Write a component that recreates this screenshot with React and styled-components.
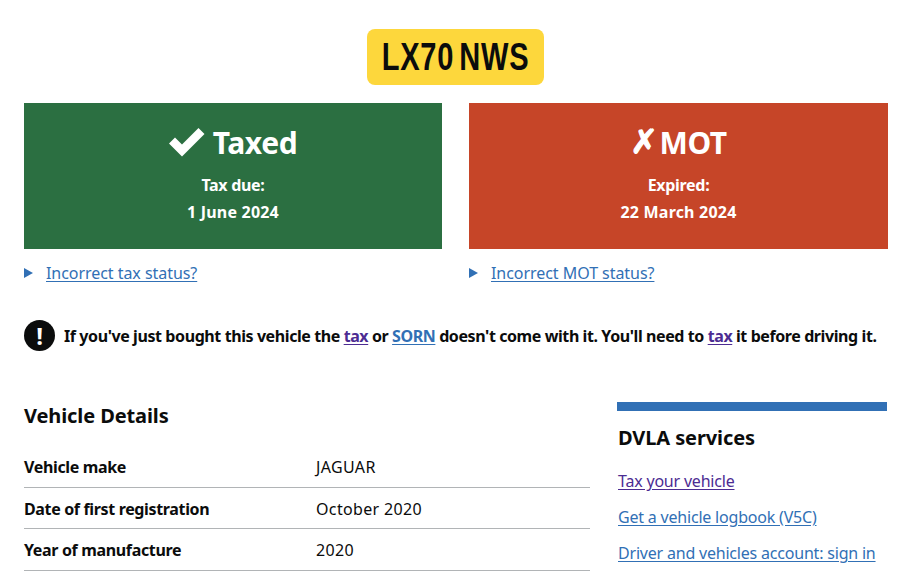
import React from 'react';
import styled, { createGlobalStyle } from 'styled-components';

const GlobalStyle = createGlobalStyle`
  html, body {
    margin: 0;
    height: 571px;
    overflow: hidden;
    background: #fff;
  }
  body {
    font-family: "Noto Sans", Arial, sans-serif;
    color: #0b0c0c;
  }
`;

const Page = styled.div`
  width: 864px;
  padding: 29px 32px 0 24px;
`;

const PlateRow = styled.div`
  display: flex;
  justify-content: center;
  padding-right: 1px;
  margin-bottom: 18px;
`;

const Plate = styled.div`
  width: 177px;
  height: 56px;
  display: flex;
  align-items: center;
  justify-content: center;
  background: #fdd73c;
  border-radius: 8px;
`;

const PlateText = styled.span`
  display: inline-block;
  font-family: "Liberation Sans", Arial, sans-serif;
  font-weight: 700;
  font-size: 38px;
  line-height: 56px;
  white-space: pre;
  word-spacing: -5px;
  letter-spacing: 1px;
  color: #0b0c0c;
  transform: scaleX(0.765);
`;

const StatusGrid = styled.div`
  display: grid;
  grid-template-columns: 418px 419px;
  column-gap: 27px;
`;

const StatusCard = styled.div`
  height: 146px;
  box-sizing: border-box;
  padding-top: 19px;
  background: ${p => p.$bg};
  color: #fff;
  text-align: center;
`;

const StatusTitle = styled.div`
  display: flex;
  align-items: center;
  justify-content: center;
  gap: ${p => p.$gap}px;
  height: 40px;
  font-size: 30px;
  font-weight: 700;
  letter-spacing: -0.4px;
`;

const CrossGlyph = styled.span`
  font-family: "DejaVu Sans", sans-serif;
  font-size: 33px;
  font-weight: 700;
  line-height: 40px;
  -webkit-text-stroke: 1.2px #fff;
`;

const StatusLabel = styled.div`
  margin-top: 10px;
  font-size: 16px;
  font-weight: 700;
  line-height: 27px;
  letter-spacing: -0.3px;
`;

const StatusDate = styled.div`
  font-size: 16px;
  font-weight: 700;
  line-height: 27px;
  letter-spacing: 0.2px;
`;

const Toggle = styled.div`
  display: flex;
  align-items: center;
  gap: 13px;
  margin-top: 14px;
  font-size: 16px;
  line-height: 20px;
  letter-spacing: -0.05px;
`;

const Arrow = styled.span`
  width: 0;
  height: 0;
  border-style: solid;
  border-width: 5px 0 5px 9px;
  border-color: transparent transparent transparent #3170b5;
`;

const Link = styled.a`
  color: ${p => (p.$visited ? '#4c2c92' : '#3170b5')};
  text-decoration: underline;
  text-underline-offset: 2px;
`;

const Notice = styled.div`
  display: flex;
  align-items: center;
  gap: 9px;
  margin-top: 37px;
  font-size: 16px;
  font-weight: 700;
  letter-spacing: -0.41px;
  white-space: nowrap;
`;

const NoticeIcon = styled.span`
  flex: none;
  width: 31px;
  height: 31px;
  border-radius: 50%;
  background: #0b0c0c;
  color: #fff;
  display: flex;
  align-items: center;
  justify-content: center;
  font-size: 24px;
  font-weight: 700;
  line-height: 1;
`;

const Columns = styled.div`
  display: grid;
  grid-template-columns: 566px 270px;
  column-gap: 27px;
  margin-top: 51px;
`;

const Heading = styled.h2`
  margin: 0;
  font-size: 20px;
  line-height: 28px;
  font-weight: 700;
  letter-spacing: -0.1px;
`;

const DetailsHeading = styled(Heading)`
  margin-bottom: 16px;
`;

const DetailRow = styled.div`
  display: grid;
  grid-template-columns: 292px 1fr;
  padding: 11px 0 9px;
  font-size: 16px;
  line-height: 20px;
  height: 20.5px;
  border-bottom: 1px solid #b1b4b6;
`;

const DetailLabel = styled.span`
  font-weight: 700;
  letter-spacing: -0.35px;
`;

const DetailValue = styled.span`
  letter-spacing: 0.35px;
`;

const Sidebar = styled.aside`
  border-top: 9px solid #3170b5;
  padding: 13px 0 0 1px;
`;

const ServiceList = styled.ul`
  list-style: none;
  margin: 17px 0 0;
  padding: 0;
  font-size: 16px;
  line-height: 25px;
  letter-spacing: -0.2px;
`;

const ServiceItem = styled.li`
  margin-bottom: 11px;
`;

const details = [
  ['Vehicle make', 'JAGUAR'],
  ['Date of first registration', 'October 2020'],
  ['Year of manufacture', '2020'],
];

export default function App() {
  return (
    <Page>
      <GlobalStyle />
      <PlateRow>
        <Plate>
          <PlateText>LX70 NWS</PlateText>
        </Plate>
      </PlateRow>

      <StatusGrid>
        <div>
          <StatusCard $bg="#2b6f41">
            <StatusTitle $gap={8}>
              <svg width="36" height="29" viewBox="0 0 36 29">
                <path d="M0 15.5 L6 9.5 L13 16.5 L29.5 0 L35.5 6 L13 28.5 Z" fill="#fff" />
              </svg>
              Taxed
            </StatusTitle>
            <StatusLabel>Tax due:</StatusLabel>
            <StatusDate>1 June 2024</StatusDate>
          </StatusCard>
          <Toggle>
            <Arrow />
            <Link href="#">Incorrect tax status?</Link>
          </Toggle>
        </div>
        <div>
          <StatusCard $bg="#c64528">
            <StatusTitle $gap={2}>
              <CrossGlyph>✗</CrossGlyph>
              MOT
            </StatusTitle>
            <StatusLabel>Expired:</StatusLabel>
            <StatusDate>22 March 2024</StatusDate>
          </StatusCard>
          <Toggle>
            <Arrow />
            <Link href="#">Incorrect MOT status?</Link>
          </Toggle>
        </div>
      </StatusGrid>

      <Notice>
        <NoticeIcon>!</NoticeIcon>
        <span>
          If you've just bought this vehicle the <Link href="#" $visited>tax</Link> or{' '}
          <Link href="#">SORN</Link> doesn't come with it. You'll need to{' '}
          <Link href="#" $visited>tax</Link> it before driving it.
        </span>
      </Notice>

      <Columns>
        <section>
          <DetailsHeading>Vehicle Details</DetailsHeading>
          {details.map(([label, value]) => (
            <DetailRow key={label}>
              <DetailLabel>{label}</DetailLabel>
              <DetailValue>{value}</DetailValue>
            </DetailRow>
          ))}
        </section>
        <Sidebar>
          <Heading>DVLA services</Heading>
          <ServiceList>
            <ServiceItem><Link href="#" $visited>Tax your vehicle</Link></ServiceItem>
            <ServiceItem><Link href="#">Get a vehicle logbook (V5C)</Link></ServiceItem>
            <ServiceItem><Link href="#">Driver and vehicles account: sign in or set up</Link></ServiceItem>
          </ServiceList>
        </Sidebar>
      </Columns>
    </Page>
  );
}
